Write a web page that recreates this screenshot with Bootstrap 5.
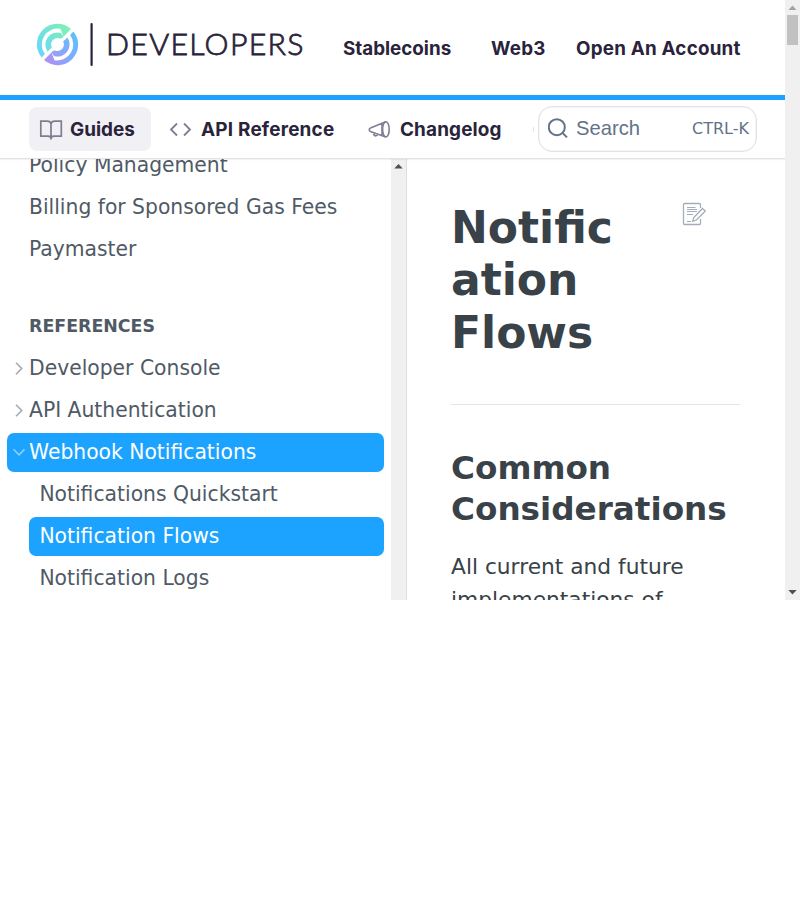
<!DOCTYPE html>
<html lang="en">
<head>
<meta charset="utf-8">
<title>Notification Flows</title>
<meta name="viewport" content="width=device-width, initial-scale=1">
<link href="https://cdn.jsdelivr.net/npm/bootstrap@5.3.0/dist/css/bootstrap.min.css" rel="stylesheet">
<style>
body{font-family:"DejaVu Sans",sans-serif;background:#fff;color:#384248}
.viewer{width:800px;height:600px}
.topbar{height:100px;border-bottom:5px solid #1ca3ff;padding-left:36px}
.topbar svg{margin-bottom:5px}
.toplink,.tab-link{font-family:Inter,sans-serif;font-weight:700;color:#29233b;text-decoration:none;white-space:nowrap;line-height:24px}
.toplink{font-size:18.8px;padding-top:2px}
.topgap-a{margin-left:38px;width:148px}
.topgap-b{width:85px;letter-spacing:.25px}
.toplink-wide{letter-spacing:.22px}
.subbar{height:59px;border-bottom:1px solid #e3e3e5;box-shadow:0 1px 1px #0000000d;padding-left:29px;z-index:2}
.tab-link{height:44px;font-size:18.9px;border-radius:8px;padding-left:10px;padding-top:1px}
.tab-link svg{margin-right:7px}
.tab-on{background:#f1f0f5;width:122px}
.tab-api{width:199px;padding-left:17px;letter-spacing:.22px}
.tab-api svg{margin-right:8px}
.tab-log{width:183px;padding-left:17px;letter-spacing:.15px}
.tab-log svg{margin-right:8px}
.tick{width:1px;height:5px;background:#e6e5ea;margin-right:4px}
.search-field{width:219px;height:46px;border:1.5px solid #e3e3e3;box-shadow:inset 0 0 0 .5px #e9e9e9;border-radius:14px;color:#637288;padding:0 7px 2px 9px}
.search-word{font:20.2px/24px "Liberation Sans",sans-serif;margin-left:6px}
.search-key{font-size:16px;line-height:24px;padding-top:2px}
.side{width:391px;color:#4f5a66;font-size:20.32px}
.side-item{height:39px;margin:0 7px 3px;padding-left:22px;line-height:38px;border-radius:7px;white-space:nowrap;display:flex;align-items:stretch}
.side-item svg{width:14px;height:39px;margin-left:-18px;margin-right:4px;flex:none}
.side-first{margin-top:-13px}
.side-child{margin-left:29px;padding-left:10.4px}
.side-on{background:#1ca3ff;color:#fff}
.side-title{font-size:17.4px;font-weight:700;line-height:24px;margin:45px 0 11px 29px}
.gutter{background:#f0f0f0;flex:none}
.gutter-side{width:16px;border-right:1px solid #dedede;margin-right:1px}
.gutter-page{width:15px}
.thumb{width:11px;height:30px;background:#c1c1c1;margin:3px auto 0}
.doc{padding:42.5px 45px 0 43px}
.doc h1{font-size:44px;line-height:52.5px;font-weight:700;width:175px;margin:0}
.doc-rule{height:1px;background:#e3e5e8;margin-top:44.5px;width:289px}
.doc h2{font-size:32.65px;line-height:41px;font-weight:700;margin:43px 0 0;white-space:nowrap}
.doc p{font-size:21.75px;line-height:33px;margin:20px 0 0}
svg{display:block}
</style>
<script src="https://cdn.jsdelivr.net/npm/bootstrap@5.3.0/dist/js/bootstrap.bundle.min.js"></script>
</head>
<body>
<div class="viewer d-flex overflow-hidden">
  <div class="flex-grow-1 d-flex flex-column overflow-hidden">
    <header class="topbar d-flex align-items-center flex-shrink-0">
      <svg width="269" height="50" viewBox="36 20 269 50" role="img" aria-label="Developers">
        <defs>
          <linearGradient id="ga" gradientUnits="userSpaceOnUse" x1="38" y1="52" x2="70" y2="30"><stop stop-color="#68d7fa"/><stop offset="1" stop-color="#7ef1b3"/></linearGradient>
          <linearGradient id="gb" gradientUnits="userSpaceOnUse" x1="46" y1="62" x2="76" y2="38"><stop stop-color="#b090f5"/><stop offset="1" stop-color="#5fbfff"/></linearGradient>
        </defs>
        <g fill="url(#ga)">
          <path d="M71 29A20.5 20.5 0 0 0 41.6 57.4L44.9 54.1A16 16 0 0 1 60.5 28.8L63.5 36.6Z"/>
          <path d="M71 29L63.5 36.6L61 33A12 12 0 0 0 47.6 51.4L51.8 47.4A6.5 6.5 0 0 1 60.2 38.6L62.2 38Z"/>
        </g>
        <g fill="url(#gb)">
          <path d="M44 60A20.5 20.5 0 0 0 73.4 31.6L70.1 34.9A16 16 0 0 1 54.5 60.2L51.5 52.4Z"/>
          <path d="M44 60L51.5 52.4L54 56A12 12 0 0 0 67.4 37.6L63.2 41.6A6.5 6.5 0 0 1 54.8 50.4L52.8 51Z"/>
        </g>
        <path stroke="#29233b" stroke-width="2.2" stroke-linecap="round" d="M91.6 24V65"/>
        <text x="106" y="55" textLength="197.5" font-family="Lato,sans-serif" font-weight="300" font-size="30.3" fill="#29233b" stroke="#29233b" stroke-width=".8">DEVELOPERS</text>
      </svg>
      <a class="toplink topgap-a" href="#">Stablecoins</a>
      <a class="toplink topgap-b" href="#">Web3</a>
      <a class="toplink toplink-wide" href="#">Open An Account</a>
    </header>
    <nav class="subbar d-flex align-items-center flex-shrink-0 position-relative">
      <a class="tab-link tab-on d-flex align-items-center" href="#">
        <svg width="24" height="24" viewBox="0 0 24 24" fill="none" stroke="#817c91" stroke-width="1.7"><path d="M1.8 3.1H8Q12 3.1 12 6.7Q12 3.1 16 3.1H22.3V18.1H15Q12 18.1 12 20.5Q12 18.1 9 18.1H1.8ZM12 6.5V21.5"/></svg>Guides</a>
      <a class="tab-link tab-api d-flex align-items-center" href="#">
        <svg width="25" height="24" viewBox="0 0 25 24" fill="none" stroke="#817c91" stroke-width="1.8"><path d="M9 5.5L3 11.5L9 17.5M16 5.5L22 11.5L16 17.5"/></svg>API Reference</a>
      <a class="tab-link tab-log d-flex align-items-center" href="#">
        <svg width="25" height="24" viewBox="0 0 25 24" fill="none" stroke="#817c91" stroke-width="1.6" stroke-linejoin="round"><ellipse cx="18.9" cy="11.4" rx="3.3" ry="7.6"/><path d="M18.8 3.8L4 9.8Q2.2 10.6 2.2 11.8Q2.2 13.3 4 13.7L18.8 19M6.5 14.6Q6.5 17.8 8.5 17.9Q10.2 17.9 10.7 16.1M15 5.4V17.6"/></svg>Changelog</a>
      <span class="flex-grow-1"></span>
      <span class="tick"></span>
      <div class="search-field d-flex align-items-center flex-shrink-0">
        <svg width="22" height="22" viewBox="0 0 22 22" fill="none" stroke="#637288" stroke-width="2"><circle cx="8.8" cy="10.2" r="8"/><path d="M14.7 16.1L19 20.4"/></svg>
        <span class="search-word">Search</span><span class="search-key ms-auto">CTRL-K</span>
      </div>
      <span class="ps-4 pe-1"></span>
    </nav>
    <div class="d-flex flex-grow-1 overflow-hidden">
      <aside class="side flex-shrink-0">
        <div class="side-item side-first">Policy Management</div>
        <div class="side-item">Billing for Sponsored Gas Fees</div>
        <div class="side-item">Paymaster</div>
        <div class="side-title">REFERENCES</div>
        <div class="side-item"><svg viewBox="0 0 14 39" fill="none" stroke="#a4a9b0" stroke-width="1.6"><path d="M5 13.7L10.7 19.5L5 25.3"/></svg>Developer Console</div>
        <div class="side-item"><svg viewBox="0 0 14 39" fill="none" stroke="#a4a9b0" stroke-width="1.6"><path d="M5 13.7L10.7 19.5L5 25.3"/></svg>API Authentication</div>
        <div class="side-item side-on"><svg viewBox="0 0 14 39" fill="none" stroke="#8dcfff" stroke-width="1.6"><path d="M2.5 16.3L8 21.8L13.5 16.3"/></svg>Webhook Notifications</div>
        <div class="side-item side-child">Notifications Quickstart</div>
        <div class="side-item side-child side-on">Notification Flows</div>
        <div class="side-item side-child">Notification Logs</div>
      </aside>
      <div class="gutter gutter-side"><svg width="15" height="16"><path d="M3.3 9.5L7.5 5L11.7 9.5Z" fill="#505050"/></svg></div>
      <main class="doc flex-grow-1">
        <div class="d-flex justify-content-between align-items-start">
          <h1>Notific<br>ation<br>Flows</h1>
          <svg class="me-4" width="34" height="26" viewBox="0 0 34 26" fill="none" stroke="#a3adbb" stroke-width="1.3"><path d="M18.5 6V2.5Q18.5 1.5 17.5 1.5H2.5Q1.5 1.5 1.5 2.5V21.5Q1.5 22.5 2.5 22.5H17.5Q18.5 22.5 18.5 21.5V17"/><path stroke-width="1" d="M5 5.5H13.5M5 7.5H15M5 9.5H15M5 12.5H11M5 19.5H9"/><path d="M20.5 6.5L23.3 9L14.5 18L10.8 19.3L11.8 15.5Z"/></svg>
        </div>
        <div class="doc-rule"></div>
        <h2>Common<br>Considerations</h2>
        <p>All current and future implementations of</p>
      </main>
    </div>
  </div>
  <div class="gutter gutter-page d-flex flex-column">
    <svg width="15" height="12"><path d="M3.5 10L7.5 5.5L11.5 10Z" fill="#a3a3a3"/></svg>
    <div class="thumb"></div>
    <svg class="mt-auto" width="15" height="15"><path d="M3.3 5L7.5 9.5L11.7 5Z" fill="#505050"/></svg>
  </div>
</div>
</body>
</html>
